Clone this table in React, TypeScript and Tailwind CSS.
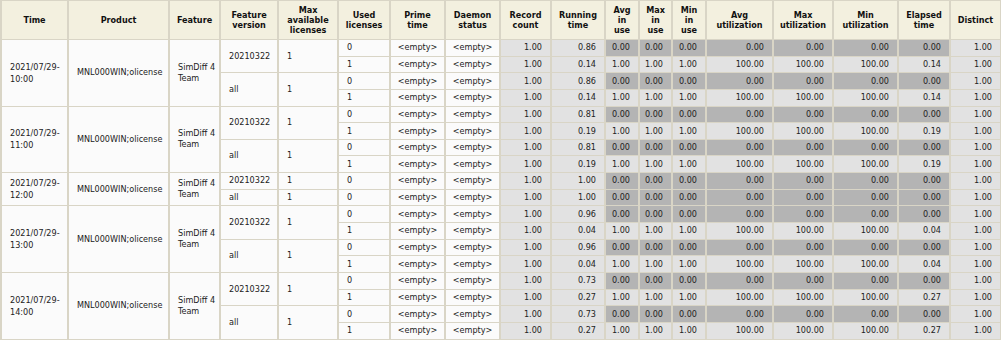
import React from "react";

type Row = { used: number; run: string };
type Version = { name: string; rows: Row[] };
type Group = { time: string; versions: Version[] };

const groups: Group[] = [
  {
    time: "10:00",
    versions: [
      { name: "20210322", rows: [{ used: 0, run: "0.86" }, { used: 1, run: "0.14" }] },
      { name: "all", rows: [{ used: 0, run: "0.86" }, { used: 1, run: "0.14" }] },
    ],
  },
  {
    time: "11:00",
    versions: [
      { name: "20210322", rows: [{ used: 0, run: "0.81" }, { used: 1, run: "0.19" }] },
      { name: "all", rows: [{ used: 0, run: "0.81" }, { used: 1, run: "0.19" }] },
    ],
  },
  {
    time: "12:00",
    versions: [
      { name: "20210322", rows: [{ used: 0, run: "1.00" }] },
      { name: "all", rows: [{ used: 0, run: "1.00" }] },
    ],
  },
  {
    time: "13:00",
    versions: [
      { name: "20210322", rows: [{ used: 0, run: "0.96" }, { used: 1, run: "0.04" }] },
      { name: "all", rows: [{ used: 0, run: "0.96" }, { used: 1, run: "0.04" }] },
    ],
  },
  {
    time: "14:00",
    versions: [
      { name: "20210322", rows: [{ used: 0, run: "0.73" }, { used: 1, run: "0.27" }] },
      { name: "all", rows: [{ used: 0, run: "0.73" }, { used: 1, run: "0.27" }] },
    ],
  },
];

const bd = "border-y border-x-2 border-[#d9d5c6]";
const th = `${bd} bg-[#f3f0df] text-center align-middle font-bold text-[#111] leading-[10px] px-[2px]`;
const left = `${bd} bg-[#fbfbfb] align-middle text-left pl-2 pr-1 whitespace-nowrap`;
const center = `${bd} bg-[#fbfbfb] align-middle text-center whitespace-nowrap`;
const light = `${bd} bg-[#e2e2e2] align-middle text-right pr-2 whitespace-nowrap`;
const dark = `${bd} bg-[#b4b4b4] align-middle text-right pr-2 whitespace-nowrap`;

function Header() {
  return (
    <tr className="h-[39px]">
      <th className={th}>Time</th>
      <th className={th}>Product</th>
      <th className={th}>Feature</th>
      <th className={th}>
        Feature
        <br />
        version
      </th>
      <th className={th}>
        Max
        <br />
        available
        <br />
        licenses
      </th>
      <th className={th}>
        Used
        <br />
        licenses
      </th>
      <th className={th}>
        Prime
        <br />
        time
      </th>
      <th className={th}>
        Daemon
        <br />
        status
      </th>
      <th className={th}>
        Record
        <br />
        count
      </th>
      <th className={th}>
        Running
        <br />
        time
      </th>
      <th className={th}>
        Avg
        <br />
        in
        <br />
        use
      </th>
      <th className={th}>
        Max
        <br />
        in
        <br />
        use
      </th>
      <th className={th}>
        Min
        <br />
        in
        <br />
        use
      </th>
      <th className={th}>
        Avg
        <br />
        utilization
      </th>
      <th className={th}>
        Max
        <br />
        utilization
      </th>
      <th className={th}>
        Min
        <br />
        utilization
      </th>
      <th className={th}>
        Elapsed
        <br />
        time
      </th>
      <th className={th}>Distinct</th>
    </tr>
  );
}

export default function App() {
  const body: React.ReactNode[] = [];
  groups.forEach((g, gi) => {
    const total = g.versions.reduce((s, v) => s + v.rows.length, 0);
    g.versions.forEach((v, vi) => {
      v.rows.forEach((r, ri) => {
        const on = r.used === 1;
        const c = on ? light : dark;
        const one = on ? "1.00" : "0.00";
        const pct = on ? "100.00" : "0.00";
        body.push(
          <tr key={`${gi}-${vi}-${ri}`} className="h-[16.65px]">
            {vi === 0 && ri === 0 && (
              <>
                <td rowSpan={total} className={`${left} leading-[12px]`}>
                  2021/07/29-
                  <br />
                  {g.time}
                </td>
                <td rowSpan={total} className={left}>
                  MNL000WIN;olicense
                </td>
                <td rowSpan={total} className={`${left} leading-[11px]`}>
                  SimDiff 4
                  <br />
                  Team
                </td>
              </>
            )}
            {ri === 0 && (
              <>
                <td rowSpan={v.rows.length} className={left}>
                  {v.name}
                </td>
                <td rowSpan={v.rows.length} className={left}>
                  1
                </td>
              </>
            )}
            <td className={left}>{r.used}</td>
            <td className={center}>&lt;empty&gt;</td>
            <td className={center}>&lt;empty&gt;</td>
            <td className={light}>1.00</td>
            <td className={light}>{r.run}</td>
            <td className={c}>{one}</td>
            <td className={c}>{one}</td>
            <td className={c}>{one}</td>
            <td className={c}>{pct}</td>
            <td className={c}>{pct}</td>
            <td className={c}>{pct}</td>
            <td className={c}>{on ? r.run : "0.00"}</td>
            <td className={light}>1.00</td>
          </tr>
        );
      });
    });
  });

  return (
    <div className="w-[1001px] h-[342px] bg-white overflow-hidden">
      <table className="table-fixed w-[1000px] border-collapse font-['DejaVu_Sans_Condensed','DejaVu_Sans',sans-serif] text-[9px] text-[#222] leading-[11px] border border-[#d9d5c6]">
        <colgroup>
          <col className="w-[67px]" />
          <col className="w-[101px]" />
          <col className="w-[51px]" />
          <col className="w-[58px]" />
          <col className="w-[60px]" />
          <col className="w-[52px]" />
          <col className="w-[55px]" />
          <col className="w-[55px]" />
          <col className="w-[51px]" />
          <col className="w-[54px]" />
          <col className="w-[34px]" />
          <col className="w-[33px]" />
          <col className="w-[34px]" />
          <col className="w-[67px]" />
          <col className="w-[60px]" />
          <col className="w-[65px]" />
          <col className="w-[52px]" />
          <col className="w-[51px]" />
        </colgroup>
        <thead>
          <Header />
        </thead>
        <tbody>{body}</tbody>
      </table>
    </div>
  );
}
